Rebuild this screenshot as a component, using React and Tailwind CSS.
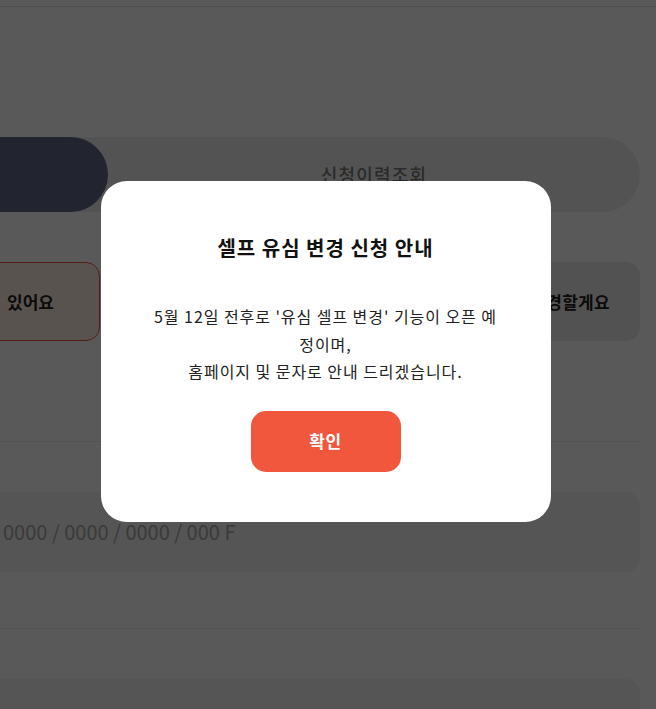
import { useState } from 'react'

const FONT = { fontFamily: '"Noto Sans CJK KR", "Noto Sans", sans-serif' }

function NoticeModal({ onClose }) {
  return (
    <div className="fixed inset-0 bg-black/65 flex items-center justify-center pr-[5px] pb-[6px]">
      <div className="w-[450px] h-[341px] bg-white rounded-[26px] flex flex-col items-center pt-[53px]">
        <h2 className="text-[20px] leading-[28px] font-bold text-[#111] tracking-[1px]">셀프 유심 변경 신청 안내</h2>
        <p className="mt-[41px] text-[16px] leading-[27.5px] text-[#222] text-center whitespace-nowrap tracking-[0.95px]">
          5월 12일 전후로 '유심 셀프 변경' 기능이 오픈 예<br />
          정이며,<br />
          홈페이지 및 문자로 안내 드리겠습니다.
        </p>
        <button
          onClick={onClose}
          className="mt-[25px] w-[150px] h-[61px] rounded-[15px] bg-[#f0573d] text-white text-[17px] font-bold tracking-[0.5px]"
        >
          확인
        </button>
      </div>
    </div>
  )
}

export default function App() {
  const [open, setOpen] = useState(true)

  return (
    <div className="min-h-screen bg-white overflow-hidden text-[#222]" style={FONT}>
      {/* Header */}
      <div className="h-[7px] border-b border-[#e2e2e2]" />

      <div className="w-[1064px] ml-[-424px] pt-[130px]">
        {/* Tabs */}
        <div className="flex h-[75px] rounded-full bg-[#eeeeee]">
          <div className="w-[532px] rounded-full bg-[#616a86] flex items-center justify-center text-white text-[18px] font-semibold">
            유심변경신청
          </div>
          <div className="flex-1 flex items-center justify-center text-[18px] font-medium text-[#7a7a7a] tracking-[1.2px]">
            신청이력조회
          </div>
        </div>

        {/* Choice cards */}
        <div className="mt-[50px] grid grid-cols-2 gap-4">
          <div className="h-[79px] rounded-[14px] border border-[#f0573d] bg-[#feede5] flex items-center justify-end pr-[45px] text-[17px] font-semibold text-[#222]">
            지금 유심 그대로 쓸 수&nbsp;&nbsp;&nbsp;있어요
          </div>
          <div className="h-[79px] rounded-[14px] bg-[#ececec] flex items-center justify-end pr-[30px] text-[17px] font-semibold text-[#222] tracking-[0.3px]">
            네, 새 유심으로 변경할게요
          </div>
        </div>

        <div className="mt-[100px] border-t border-[#ececec]" />

        {/* Serial number */}
        <div className="mt-[50px] h-[80px] rounded-[14px] bg-[#f3f3f3] flex items-center pl-[427px] text-[20px] text-[#a6a6a6]">
          0000 / 0000 / 0000 / 000 F
        </div>

        <div className="mt-[56px] border-t border-[#ececec]" />

        <div className="mt-[50px] h-[80px] rounded-[14px] bg-[#f3f3f3]" />
      </div>

      {open && <NoticeModal onClose={() => setOpen(false)} />}
    </div>
  )
}
